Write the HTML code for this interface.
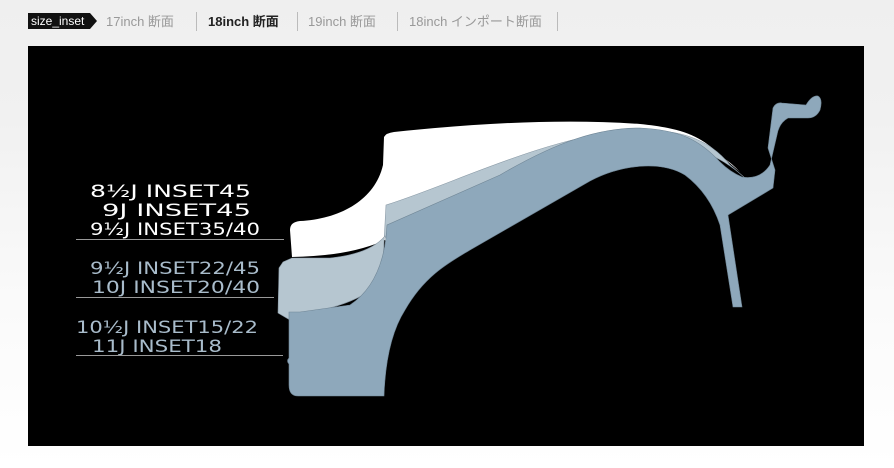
<!DOCTYPE html>
<html><head><meta charset="utf-8"><style>
body{margin:0;width:894px;height:468px;overflow:hidden;background:linear-gradient(#efefef 0,#f1f1f1 120px,#fafafa 300px,#fff 468px);font-family:"Liberation Sans","Noto Sans CJK JP",sans-serif;position:relative}
.t{position:absolute;top:12px;font-size:13px;color:#999;line-height:19px;white-space:nowrap}
.s{position:absolute;top:12px;width:1px;height:19px;background:#bbb}
</style></head><body>
<svg style="position:absolute;left:0;top:0" width="894" height="468">
<polygon points="28,13 90,13 97,21 90,29 28,29" fill="#111"/>
<text x="31" y="25" font-family="Liberation Sans" font-size="12" fill="#fff">size_inset</text>
<rect x="28" y="46" width="836" height="400" fill="#000"/>
<path d="M290,230 Q290,222 300,221 C340,219 375,200 383,165 L384,137 Q386,133 394,132 C470,124 560,118 640,124 C680,128 700,135 720,155 L740,172 C720,150 690,140 640,140 C600,142 560,160 470,215 L390,250 L385,240 Q350,256 292,257 Z" fill="#fff"/>
<path d="M283,262 L279,268 L278,313 L290,320 L300,314 Q360,305 382,280 L386,205 C450,185 540,140 620,131 C680,126 710,140 730,165 L745,178 C720,155 690,142 640,142 C600,144 560,162 470,217 L390,252 L385,236 Q370,254 330,258 L292,258 Z" fill="#b6c6d0" stroke="#8a9aa6" stroke-width="0.6"/>
<path d="M289,312 L289,358 Q286,361 289,364 L289,385 Q289,396 298,396 L384,396 Q386,340 405,310 C425,275 450,262 470,250 L590,181 C620,165 660,160 685,175 C705,190 715,210 720,225 L733,307 L742,307 L728,215 L773,188 L775,170 L768,148 L773,108 Q776,102 782,103 L806,105 Q812,95 818,96 Q823,99 820,110 Q816,118 808,118 L788,118 Q779,123 777,135 L770,165 Q760,180 742,177 Q730,172 720,162 C700,140 680,130 640,128 C600,128 560,140 500,175 L387,225 L386,238 Q380,285 350,305 L300,312 Z" fill="#8ea8bb" stroke="#6f8595" stroke-width="0.6"/>
<g font-family="DejaVu Sans" font-size="17" fill="#fff">
<text x="90" y="197" textLength="161" lengthAdjust="spacingAndGlyphs">8½J INSET45</text>
<text x="102" y="216" textLength="149" lengthAdjust="spacingAndGlyphs">9J INSET45</text>
<text x="90" y="235" textLength="170" lengthAdjust="spacingAndGlyphs">9½J INSET35/40</text>
</g>
<g font-family="DejaVu Sans" font-size="17" fill="#a9bccb">
<text x="90" y="274" textLength="170" lengthAdjust="spacingAndGlyphs">9½J INSET22/45</text>
<text x="92" y="293" textLength="168" lengthAdjust="spacingAndGlyphs">10J INSET20/40</text>
<text x="76" y="333" textLength="182" lengthAdjust="spacingAndGlyphs">10½J INSET15/22</text>
<text x="92" y="352" textLength="130" lengthAdjust="spacingAndGlyphs">11J INSET18</text>
</g>
<g stroke="#999" stroke-width="1">
<line x1="76" y1="239.5" x2="284" y2="239.5"/>
<line x1="76" y1="297.5" x2="274" y2="297.5"/>
<line x1="76" y1="355.5" x2="283" y2="355.5"/>
</g>
</svg>
<div class="t" style="left:106px">17inch 断面</div>
<div class="s" style="left:196px"></div>
<div class="t" style="left:208px;color:#222;font-weight:bold">18inch 断面</div>
<div class="s" style="left:297px"></div>
<div class="t" style="left:308px">19inch 断面</div>
<div class="s" style="left:397px"></div>
<div class="t" style="left:409px">18inch インポート断面</div>
<div class="s" style="left:557px"></div>
</body></html>
